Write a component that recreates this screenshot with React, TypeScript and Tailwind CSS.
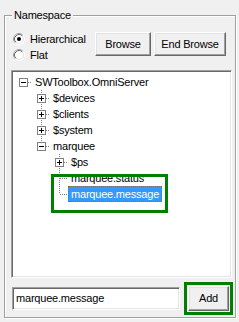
import React from "react";

type TreeNode = {
  label: string;
  depth: number;
  hasChildren?: boolean;
  expanded?: boolean;
  last?: boolean;
  selected?: boolean;
};

const nodes: TreeNode[] = [
  { label: "SWToolbox.OmniServer", depth: 0, hasChildren: true, expanded: true, last: true },
  { label: "$devices", depth: 1, hasChildren: true },
  { label: "$clients", depth: 1, hasChildren: true },
  { label: "$system", depth: 1, hasChildren: true },
  { label: "marquee", depth: 1, hasChildren: true, expanded: true, last: true },
  { label: "$ps", depth: 2, hasChildren: true },
  { label: "marquee.status", depth: 2 },
  { label: "marquee.message", depth: 2, last: true, selected: true },
];

const COL = 18;
const FIRST = 11;

// dotted connector lines + expand box for one row
const Gutter = ({ node }: { node: TreeNode }) => {
  const cx = FIRST + COL * node.depth;
  const w = cx + 9;
  const x = cx + 0.5;
  return (
    <svg width={w} height={16} className="shrink-0" shapeRendering="crispEdges">
      <g stroke="#808080" strokeDasharray="1 1" fill="none">
        {node.depth > 0 && <line x1={x} y1={0} x2={x} y2={8} />}
        {!node.last && <line x1={x} y1={8} x2={x} y2={16} />}
        <line x1={cx + 1} y1={8.5} x2={w} y2={8.5} />
      </g>
      {node.hasChildren && (
        <g>
          <rect x={cx - 4 + 0.5} y={4.5} width={8} height={8} fill="#fff" stroke="#808080" />
          <line x1={cx - 2} y1={8.5} x2={cx + 3} y2={8.5} stroke="#000" />
          {!node.expanded && <line x1={x} y1={6} x2={x} y2={11} stroke="#000" />}
        </g>
      )}
    </svg>
  );
};

const Radio = ({ checked }: { checked?: boolean }) => (
  <svg width={12} height={12} viewBox="0 0 12 12" className="shrink-0">
    <circle cx={6} cy={6} r={5.5} fill="#fff" stroke="#fff" />
    <path d="M2.11 9.89 A5.5 5.5 0 0 1 9.89 2.11" stroke="#a0a0a0" fill="none" />
    <circle cx={6} cy={6} r={4.5} fill="#fff" stroke="#e3e3e3" />
    <path d="M2.82 9.18 A4.5 4.5 0 0 1 9.18 2.82" stroke="#696969" fill="none" />
    {checked && <circle cx={6} cy={6} r={2} fill="#000" />}
  </svg>
);

const raised =
  "border border-t-white border-l-white border-r-[#696969] border-b-[#696969] bg-[#f0f0f0] shadow-[inset_-1px_-1px_0_#a0a0a0,inset_1px_1px_0_#e3e3e3]";
const sunken =
  "border border-t-[#a0a0a0] border-l-[#a0a0a0] border-r-white border-b-white bg-white shadow-[inset_1px_1px_0_#696969,inset_-1px_-1px_0_#e3e3e3]";

const App = () => {
  return (
    <div
      className="w-[239px] h-[322px] bg-[#f0f0f0] pt-[15px] pl-[4px] text-[11px] tracking-[-0.2px] text-black"
      style={{ fontFamily: '"Liberation Sans", Arial, sans-serif' }}
    >
      {/* Namespace group */}
      <div className="relative w-[232px] h-[303px] border border-[#a0a0a0] shadow-[inset_1px_1px_0_#fff,1px_1px_0_#fff] pl-[6px] pt-[15px]">
        <div className="absolute -top-[8px] left-[7px] px-[2px] bg-[#f0f0f0] leading-[14px]">Namespace</div>

        <div className="flex items-start">
          <div className="w-[84px] flex flex-col pl-[2px]">
            <label className="flex items-center gap-[5px] h-[16px]">
              <Radio checked />
              <span>Hierarchical</span>
            </label>
            <label className="flex items-center gap-[5px] h-[16px]">
              <Radio />
              <span>Flat</span>
            </label>
          </div>
          <button className={`${raised} mt-[1px] w-[56px] h-[24px] leading-none`}>Browse</button>
          <button className={`${raised} mt-[1px] ml-[3px] w-[72px] h-[24px] leading-none`}>End Browse</button>
        </div>

        {/* Tree view */}
        <div className={`${sunken} relative mt-[7px] w-[221px] h-[208px] pt-[3px]`}>
          {nodes.map((n) => (
            <div key={n.label} className="flex items-center h-[16px]">
              <Gutter node={n} />
              <span
                className={
                  n.selected
                    ? "h-[16px] leading-[14px] px-[2px] border border-dotted border-[#c06000] bg-[#3399ff] text-white"
                    : "h-[16px] leading-[14px] px-[2px] border border-transparent"
                }
              >
                {n.label}
              </span>
            </div>
          ))}
          <div className="absolute left-[39px] top-[103px] w-[117px] h-[39px] border-[3px] border-[#008000]" />
        </div>

        {/* Bottom row */}
        <div className="flex items-center mt-[4px]">
          <div className={`${sunken} ml-[1px] w-[168px] h-[23px] flex items-center pl-[3px]`}>marquee.message</div>
          <div className="ml-[4px] border-[3px] border-[#008000] p-[1px]">
            <button className={`${raised} w-[41px] h-[25px] leading-none`}>Add</button>
          </div>
        </div>
      </div>
    </div>
  );
};

export default App;
